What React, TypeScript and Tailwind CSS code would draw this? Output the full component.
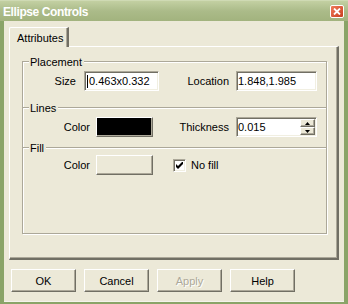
import React from "react";

const FONT = '"Liberation Sans", Arial, sans-serif';

const sunken =
  "border border-t-[#aca899] border-l-[#aca899] border-b-white border-r-white shadow-[inset_1px_1px_0_#716f64,inset_-1px_-1px_0_#f1efe2]";
const raised =
  "border border-t-white border-l-white border-b-[#716f64] border-r-[#716f64] shadow-[inset_-1px_-1px_0_#aca899]";

function Etch({ className = "" }: { className?: string }) {
  return <div className={`h-[2px] border-t border-t-[#aca899] border-b border-b-white ${className}`} />;
}

function GroupHeader({ label, className = "" }: { label: string; className?: string }) {
  return (
    <div className={`flex items-center h-[14px] ${className}`}>
      <Etch className="w-[6px]" />
      <span className="ml-[1px] mr-[2px] text-[11px] leading-[14px] text-black">{label}</span>
      <Etch className="flex-1" />
    </div>
  );
}

function Label({ text, className = "" }: { text: string; className?: string }) {
  return <div className={`text-right text-[11px] leading-[14px] text-black shrink-0 ${className}`}>{text}</div>;
}

function Arrow({ up }: { up: boolean }) {
  return (
    <svg width="5" height="3" viewBox="0 0 5 3">
      {up ? <polygon points="2.5,0 5,3 0,3" fill="#000" /> : <polygon points="0,0 5,0 2.5,3" fill="#000" />}
    </svg>
  );
}

function PushButton({ label, disabled = false }: { label: string; disabled?: boolean }) {
  return (
    <div
      className={`w-[65px] h-[23px] flex items-center justify-center bg-[#ece9d8] text-[11px] leading-[14px] ${raised} ${
        disabled ? "text-[#aca899] [text-shadow:1px_1px_0_#fff]" : "text-black"
      }`}
    >
      {label}
    </div>
  );
}

export default function App() {
  return (
    <div className="w-[348px] h-[304px] bg-[#8aa468] flex flex-col overflow-hidden" style={{ fontFamily: FONT }}>
      {/* Title bar */}
      <div className="h-[21px] shrink-0 flex items-center justify-between pl-[3px] pr-[4px] bg-gradient-to-b from-[#c3d0a2] via-[#abbb89] to-[#a2b37e] border-t border-t-[#cfdab4]">
        <span className="text-white font-bold text-[12px] leading-[12px] tracking-[-0.4px] mt-[1px]">Ellipse Controls</span>
        <div className="w-[14px] h-[13px] rounded-[2px] border border-white bg-gradient-to-br from-[#ef7a5a] to-[#c93d1d] flex items-center justify-center">
          <svg width="8" height="7" viewBox="0 0 8 7">
            <path d="M1 0.5 L7 6.5 M7 0.5 L1 6.5" stroke="#fff" strokeWidth="1.8" />
          </svg>
        </div>
      </div>

      {/* Client */}
      <div className="flex-1 ml-[4px] mr-[4px] mb-[3px] bg-[#ece9d8] flex flex-col shadow-[0_1px_0_#f4f3ec]">
        {/* Tab strip */}
        <div className="pt-[6px] pl-[5px] flex">
          <div className="relative z-10 w-[60px] h-[20px] -mb-[1px] bg-[#ece9d8] border-l border-t border-l-white border-t-white border-r-2 border-r-[#716f64] shadow-[inset_-1px_0_0_#aca899] rounded-tl-[2px] pl-[7px] pt-[3px] text-[11px] leading-[14px] text-black">
            Attributes
          </div>
        </div>

        {/* Tab panel */}
        <div className="ml-[5px] w-[330px] h-[214px] border-l border-t border-l-white border-t-white border-r-2 border-b-2 border-r-[#716f64] border-b-[#716f64] shadow-[inset_-1px_-1px_0_#aca899] flex flex-col">
          <div className="mt-[14px] ml-[12px] w-[305px] border-l border-r border-b border-[#aca899] shadow-[inset_1px_0_0_#fff,1px_1px_0_#fff] pb-[58px] flex flex-col">
            <GroupHeader label="Placement" className="-mt-[6px]" />
            {/* Size row */}
            <div className="mt-[2px] h-[20px] flex items-center">
              <Label text="Size" className="w-[53px]" />
              <div className={`ml-[8px] w-[75px] h-[20px] bg-white flex items-center pl-[2px] text-[11px] leading-[14px] text-black ${sunken}`}>
                <span className="w-[1px] h-[13px] bg-black mr-[1px]" />
                0.463x0.332
              </div>
              <Label text="Location" className="w-[70px]" />
              <div className={`ml-[7px] w-[81px] h-[20px] bg-white flex items-center pl-[1px] text-[11px] leading-[14px] text-black ${sunken}`}>
                1.848,1.985
              </div>
            </div>

            <GroupHeader label="Lines" className="mt-[10px]" />
            {/* Color row */}
            <div className="mt-[2px] h-[20px] flex items-center">
              <Label text="Color" className="w-[67px]" />
              <div className={`ml-[6px] w-[57px] h-[20px] bg-black ${raised}`} />
              <Label text="Thickness" className="w-[76px]" />
              <div className={`ml-[7px] w-[81px] h-[20px] bg-white flex items-center text-[11px] leading-[14px] text-black ${sunken}`}>
                <span className="flex-1 pl-[1px]">0.015</span>
                <div className="w-[15px] h-[16px] mr-[1px] flex flex-col">
                  <div className={`h-[8px] bg-[#ece9d8] flex items-center justify-center ${raised}`}>
                    <Arrow up />
                  </div>
                  <div className={`h-[8px] bg-[#ece9d8] flex items-center justify-center ${raised}`}>
                    <Arrow up={false} />
                  </div>
                </div>
              </div>
            </div>

            <GroupHeader label="Fill" className="mt-[4px]" />
            {/* Fill row */}
            <div className="h-[20px] flex items-center">
              <Label text="Color" className="w-[67px]" />
              <div className={`ml-[6px] w-[57px] h-[20px] bg-[#ece9d8] ${raised}`} />
              <div className={`ml-[20px] w-[13px] h-[13px] bg-white flex items-center justify-center ${sunken}`}>
                <svg width="7" height="7" viewBox="0 0 7 7">
                  <path d="M0 2 L2 4 L7 -1 L7 2 L2 7 L0 5 Z" fill="#000" />
                </svg>
              </div>
              <span className="ml-[5px] text-[11px] leading-[14px] text-black">No fill</span>
            </div>
          </div>
        </div>

        {/* Buttons */}
        <div className="mt-[9px] ml-[7px] flex gap-[8px]">
          <PushButton label="OK" />
          <PushButton label="Cancel" />
          <PushButton label="Apply" disabled />
          <PushButton label="Help" />
        </div>
      </div>
    </div>
  );
}
